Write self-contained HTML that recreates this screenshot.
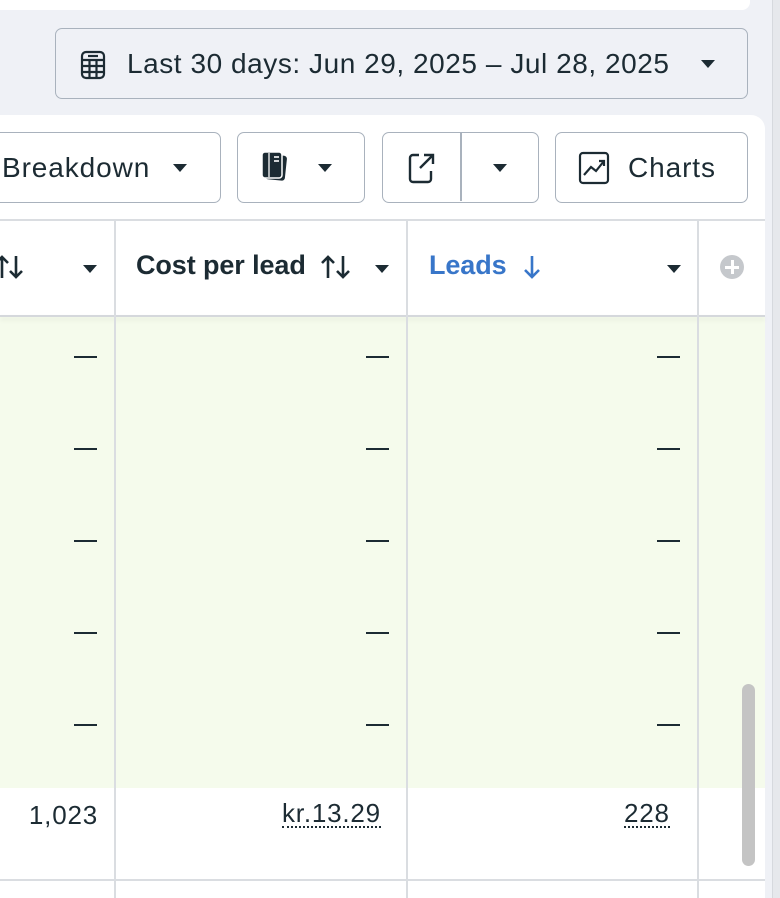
<!DOCTYPE html>
<html><head><style>
*{box-sizing:border-box;margin:0;padding:0}
body{width:780px;height:898px;overflow:hidden;background:#eff1f6;font-family:"Liberation Sans",sans-serif;color:#1c2b33;position:relative}
.abs{position:absolute}
.btn{position:absolute;border:1.5px solid #a9b2bd;border-radius:7px;background:#fff;display:flex;align-items:center}
.tri{width:0;height:0;border-left:7px solid transparent;border-right:7px solid transparent;border-top:8px solid #1c2b33;position:absolute}
.vl{position:absolute;top:220px;width:2px;height:678px;background:#dadde1}
.dash{position:absolute;width:23px;height:2px;background:#1c2b33}
.num{position:absolute;font-size:26px;letter-spacing:0.8px;text-align:right}
.dot{border-bottom:2px dotted #1c2b33;line-height:26px}
</style></head><body>
<div class="abs" style="left:0;top:0;width:750px;height:10px;background:#fff;border-radius:0 0 8px 0"></div>
<div class="abs" style="left:772px;top:0;width:8px;height:898px;background:#e6e8ec;border-left:1px solid #d6d9de"></div>
<div class="btn" style="left:55px;top:28px;width:693px;height:71px;background:#eff1f6">
<svg class="abs" style="left:24px;top:21px" width="26" height="30" viewBox="0 0 26 30" fill="none" stroke="#1c2b33" stroke-width="2.2"><rect x="2" y="2" width="22" height="26" rx="4"/><line x1="2" y1="10" x2="24" y2="10"/><line x1="2" y1="16" x2="24" y2="16"/><line x1="2" y1="22" x2="24" y2="22"/><line x1="9.5" y1="10" x2="9.5" y2="28"/><line x1="16.5" y1="10" x2="16.5" y2="28"/><line x1="8" y1="6" x2="18" y2="6"/></svg>
<span class="abs" style="left:71px;top:19px;font-size:28px;letter-spacing:0.55px">Last 30 days: Jun 29, 2025 – Jul 28, 2025</span>
<div class="tri" style="left:645px;top:31px"></div>
</div>
<div class="abs" style="left:0;top:115px;width:765px;height:783px;background:#fff;border-radius:0 14px 0 0"></div>
<div class="btn" style="left:-10px;top:132px;width:231px;height:71px"><span class="abs" style="left:11px;top:19px;font-size:28px;letter-spacing:0.9px">Breakdown</span><div class="tri" style="left:182px;top:31px"></div></div>
<div class="btn" style="left:237px;top:132px;width:128px;height:71px">
<svg class="abs" style="left:22px;top:18px" width="34" height="34" viewBox="0 0 34 34"><rect x="6" y="4" width="20" height="25" rx="3" fill="#1c2b33" transform="rotate(6 16 16)"/><rect x="2" y="1" width="20" height="26" rx="3" fill="#1c2b33" stroke="#fff" stroke-width="1.5"/><line x1="14" y1="6" x2="19" y2="6" stroke="#fff" stroke-width="1.6"/><line x1="14" y1="10" x2="19" y2="10" stroke="#fff" stroke-width="1.6"/><line x1="9" y1="2" x2="9" y2="26" stroke="#fff" stroke-width="1.3"/></svg>
<div class="tri" style="left:80px;top:31px"></div></div>
<div class="btn" style="left:382px;top:132px;width:157px;height:71px">
<svg class="abs" style="left:24px;top:19px" width="30" height="32" viewBox="0 0 30 32" fill="none" stroke="#1c2b33" stroke-width="2.4"><path d="M12 3H6a3 3 0 0 0-3 3v21a3 3 0 0 0 3 3h15a3 3 0 0 0 3-3v-8"/><path d="M17 3h9v9M26 3L13 16"/></svg>
<div class="abs" style="left:77px;top:0;width:1.5px;height:68px;background:#a9b2bd"></div>
<div class="tri" style="left:110px;top:31px"></div></div>
<div class="btn" style="left:555px;top:132px;width:193px;height:71px">
<svg class="abs" style="left:22px;top:18px" width="32" height="34" viewBox="0 0 32 34" fill="none" stroke="#1c2b33" stroke-width="2.2"><rect x="2" y="2" width="28" height="30" rx="3"/><path d="M6 24l7-8 5 4 8-10M21 10h5v5"/></svg>
<span class="abs" style="left:72px;top:19px;font-size:28px;letter-spacing:0.9px">Charts</span></div>
<div class="abs" style="left:0;top:219px;width:765px;height:2px;background:#dadde1"></div>
<div class="abs" style="left:0;top:316px;width:765px;height:472px;background:#f5fbec"></div>
<div class="abs" style="left:0;top:315px;width:765px;height:2px;background:#d5d8dc;box-shadow:0 3px 5px rgba(0,0,0,0.08)"></div>
<div class="vl" style="left:114px"></div><div class="vl" style="left:406px"></div><div class="vl" style="left:697px"></div>
<div class="abs" style="left:0;top:879px;width:765px;height:2px;background:#dadde1"></div>
<svg class="abs" style="left:-4px;top:254px" width="28" height="26" viewBox="0 0 28 26" fill="none" stroke="#1c2b33" stroke-width="2.6"><path d="M6 24V3M0 9l6-6 6 6"/><path d="M20 2v21M14 17l6 6 6-6"/></svg>
<div class="tri" style="left:83px;top:265px"></div>
<span class="abs" style="left:136px;top:250px;font-size:27px;font-weight:bold;letter-spacing:-0.1px">Cost per lead</span>
<svg class="abs" style="left:320px;top:254px" width="32" height="26" viewBox="0 0 32 26" fill="none" stroke="#1c2b33" stroke-width="2.6"><path d="M8 24V3M2 9l6-6 6 6"/><path d="M23 2v21M17 17l6 6 6-6"/></svg>
<div class="tri" style="left:375px;top:265px"></div>
<span class="abs" style="left:429px;top:250px;font-size:27px;font-weight:bold;color:#3876c9;letter-spacing:-0.1px">Leads</span>
<svg class="abs" style="left:521px;top:254px" width="22" height="26" viewBox="0 0 22 26" fill="none" stroke="#3876c9" stroke-width="2.6"><path d="M11 2v21M4 16l7 7 7-7"/></svg>
<div class="tri" style="left:667px;top:265px"></div>
<div class="abs" style="left:720px;top:255px;width:24px;height:24px;border-radius:50%;background:#c5c8cc"><div class="abs" style="left:5px;top:10.5px;width:14px;height:3px;background:#fff"></div><div class="abs" style="left:10.5px;top:5px;width:3px;height:14px;background:#fff"></div></div>
<div class="dash" style="left:74px;top:356px"></div><div class="dash" style="left:366px;top:356px"></div><div class="dash" style="left:657px;top:356px"></div>
<div class="dash" style="left:74px;top:448px"></div><div class="dash" style="left:366px;top:448px"></div><div class="dash" style="left:657px;top:448px"></div>
<div class="dash" style="left:74px;top:540px"></div><div class="dash" style="left:366px;top:540px"></div><div class="dash" style="left:657px;top:540px"></div>
<div class="dash" style="left:74px;top:632px"></div><div class="dash" style="left:366px;top:632px"></div><div class="dash" style="left:657px;top:632px"></div>
<div class="dash" style="left:74px;top:724px"></div><div class="dash" style="left:366px;top:724px"></div><div class="dash" style="left:657px;top:724px"></div>
<span class="num" style="left:0;width:98px;top:800px">1,023</span>
<span class="abs num dot" style="left:282px;top:800px">kr.13.29</span>
<span class="abs num dot" style="left:624px;top:800px">228</span>
<div class="abs" style="left:742px;top:684px;width:13px;height:182px;border-radius:7px;background:#c4c4c4"></div>
</body></html>
